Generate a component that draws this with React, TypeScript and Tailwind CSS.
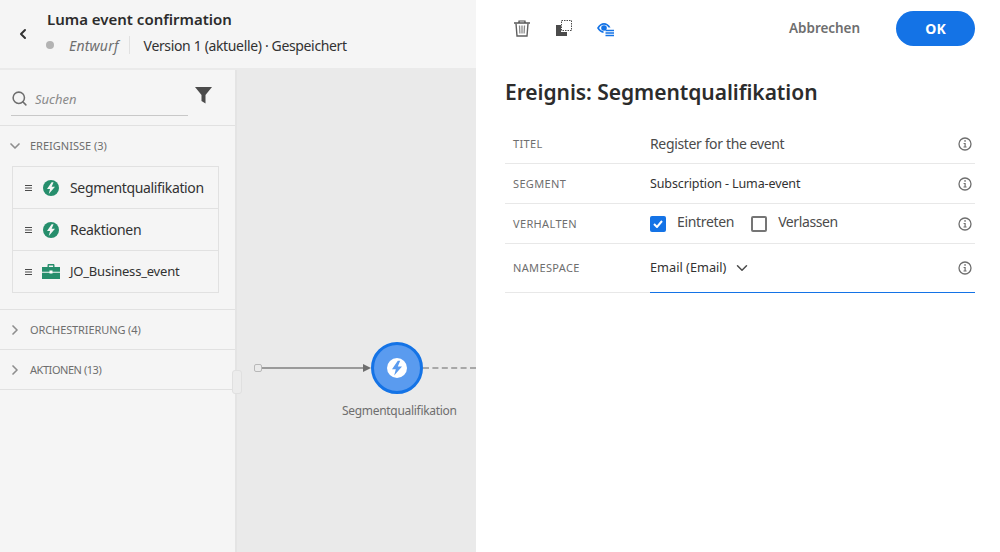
import React from 'react';
import { ChevronDown, ChevronLeft, ChevronRight, Search } from 'lucide-react';

const FONT = 'font-["Noto_Sans","Open_Sans",sans-serif]';

const Bolt: React.FC<{ fill: string; bolt: string; size: number }> = ({ fill, bolt, size }) => (
  <svg width={size} height={size} viewBox="0 0 20 20" className="shrink-0">
    <circle cx="10" cy="10" r="10" fill={fill} />
    <path d="M10.800 2.800 5 11.200h3.800L7.200 17.400 15 8.400h-4.200l2.400-5.600z" fill={bolt} />
  </svg>
);

const Briefcase: React.FC = () => (
  <svg width="18" height="15" viewBox="0 0 18 15" className="shrink-0">
    <path d="M5.500 3V1.200C5.500.5 6 0 6.700 0h4.600c.7 0 1.200.5 1.200 1.200V3h-1.400V1.400H6.900V3z" fill="#268e6c" />
    <path d="M0 3h18v4.800H0zM0 8.800h18V15H0z" fill="#268e6c" />
    <rect x="7.500" y="6.500" width="3" height="3" fill="#fff" />
  </svg>
);

const Info: React.FC = () => (
  <svg width="14" height="14" viewBox="0 0 14 14" className="shrink-0">
    <circle cx="7" cy="7" r="6" fill="none" stroke="#6e6e6e" strokeWidth="1.300" />
    <rect x="6.300" y="3.200" width="1.500" height="1.500" fill="#6e6e6e" />
    <path d="M5.600 6h2.100v3.600h.9v.9H5.500v-.9h1V6.900h-.9z" fill="#6e6e6e" />
  </svg>
);

const DragLines: React.FC = () => (
  <svg width="7" height="6" viewBox="0 0 7 6" className="shrink-0">
    <path d="M0 .5h7M0 3h7M0 5.500h7" stroke="#4b4b4b" strokeWidth="1" />
  </svg>
);

const PaletteItem: React.FC<{ label: string; textClass: string; icon: React.ReactNode }> = ({ label, textClass, icon }) => (
  <div className="flex h-[42px] items-center border-b border-[#e1e1e1] pl-3 last:h-[41px] last:border-b-0">
    <DragLines />
    <div className="ml-[10px] flex w-[18px] justify-center">{icon}</div>
    <span className={`ml-[10px] text-[#323232] ${textClass}`}>{label}</span>
  </div>
);

const Section: React.FC<{ label: string; count: string; tracking: string }> = ({ label, count, tracking }) => (
  <div className="flex h-10 items-center border-b border-[#e1e1e1] pl-[7px] pt-px">
    <ChevronRight size={16} strokeWidth={2.500} className="text-[#8e8e8e]" />
    <span className={`ml-[7px] text-[11px] text-[#6e6e6e] ${tracking}`}>{label} ({count})</span>
  </div>
);

const Field: React.FC<{ label: string; height: string; line?: string; children: React.ReactNode }> = ({ label, height, line = 'border-b border-[#e8e8e8]', children }) => (
  <div className={`flex items-center ${height} ${line}`}>
    <span className="w-[145px] pt-px pl-2 text-[11px] tracking-[0.35px] text-[#6e6e6e]">{label}</span>
    <div className="flex flex-1 items-center">{children}</div>
    <div className="mr-[3px]"><Info /></div>
  </div>
);

const App: React.FC = () => {
  return (
    <div className={`flex h-[552px] w-[1000px] overflow-hidden bg-white ${FONT}`}>
      <div className="flex w-[476px] flex-col">
        <header className="flex h-[68px] shrink-0 bg-[#f5f5f5]">
          <div className="flex w-[46px] items-center justify-center">
            <ChevronLeft size={16} strokeWidth={3} className="text-[#323232]" />
          </div>
          <div className="pt-[9px]">
            <div className="pl-px text-[15px] font-semibold leading-5 text-[#2c2c2c]">Luma event confirmation</div>
            <div className="mt-[6px] flex h-5 items-center text-[14px]">
              <span className="h-2 w-2 rounded-full bg-[#b3b3b3]" />
              <span className="ml-[15px] italic tracking-[0.2px] text-[#6e6e6e]">Entwurf</span>
              <span className="ml-[10px] h-[18px] w-px bg-[#e1e1e1]" />
              <span className="ml-[14px] tracking-[-0.35px] text-[#323232]">Version 1 (aktuelle) · Gespeichert</span>
            </div>
          </div>
        </header>
        <div className="flex flex-1 border-t-2 border-[#eaeaea]">
          <aside className="w-[235px] shrink-0 bg-[#f5f5f5]">
            <div className="flex h-[56px] border-b border-[#e1e1e1] pl-[11px]">
              <div className="mt-[15px] flex h-[31px] w-[177px] items-center border-b border-[#c8c8c8]">
                <Search size={17} strokeWidth={2.200} className="mb-[4px] text-[#6e6e6e]" />
                <span className="ml-[7px] text-[13px] italic text-[#8a8a8a]">Suchen</span>
              </div>
              <svg width="17" height="17" viewBox="0 0 17 17" className="ml-[7px] mt-[17px]">
                <path d="M0 0h17L10.500 8v8.500L6.500 14V8z" fill="#4b4b4b" />
              </svg>
            </div>
            <div className="border-b border-[#e1e1e1] pb-4">
              <div className="flex h-10 items-center pl-[7px]">
                <ChevronDown size={16} strokeWidth={2.500} className="text-[#8e8e8e]" />
                <span className="ml-[7px] text-[11px] text-[#6e6e6e]">EREIGNISSE (3)</span>
              </div>
              <div className="ml-3 w-[207px] border border-[#e1e1e1]">
                <PaletteItem label="Segmentqualifikation" textClass="text-[14px] tracking-[-0.35px]" icon={<Bolt size={16} fill="#268e6c" bolt="#f5f5f5" />} />
                <PaletteItem label="Reaktionen" textClass="text-[14px] tracking-[-0.3px]" icon={<Bolt size={16} fill="#268e6c" bolt="#f5f5f5" />} />
                <PaletteItem label="JO_Business_event" textClass="text-[13px] tracking-[-0.2px]" icon={<Briefcase />} />
              </div>
            </div>
            <Section label="ORCHESTRIERUNG" count="4" tracking="tracking-[-0.1px]" />
            <Section label="AKTIONEN" count="13" tracking="tracking-[-0.45px]" />
          </aside>
          <main className="relative flex-1 border-l-2 border-[#e4e4e4] bg-[#eaeaea]">
            {/* journey canvas: node placement is free-form */}
            <div className="absolute left-[-5px] top-[300px] h-6 w-[10px] rounded-[3px] border border-[#e0e0e0] bg-[#ececec]" />
            <div className="absolute left-[17px] top-[294px] h-[8px] w-[8px] rounded-[2px] border border-[#b8b8b8]" />
            <div className="absolute left-[25px] top-[297px] h-[2px] w-[102px] bg-[#9a9a9a]" />
            <svg width="8" height="8" viewBox="0 0 8 8" className="absolute left-[126px] top-[294px]">
              <path d="M0 0l8 4-8 4z" fill="#6e6e6e" />
            </svg>
            <div className="absolute left-[134px] top-[272px] flex h-[52px] w-[52px] items-center justify-center rounded-full border-[3px] border-[#1473e6] bg-[#5a9bef]">
              <Bolt size={20} fill="#fff" bolt="#5a9bef" />
            </div>
            <div className="absolute left-[186px] top-[297px] w-[53px] border-t-2 border-dashed border-[#a8a8a8]" />
            <div className="absolute left-[105px] top-[332px] text-[12px] tracking-[-0.3px] text-[#6e6e6e]">Segmentqualifikation</div>
          </main>
        </div>
      </div>
      <section className="flex-1 bg-white pl-[29px] pr-[25px]">
        <div className="flex h-[57px] items-center">
          <svg width="16" height="17" viewBox="0 0 16 17" className="ml-[9px]">
            <path d="M0 3h16" stroke="#4b4b4b" strokeWidth="1.400" />
            <path d="M5 3V1h6v2" fill="none" stroke="#4b4b4b" strokeWidth="1.200" />
            <path d="M2 3.500 3 16h10l1-12.500" fill="none" stroke="#5f5f5f" strokeWidth="1.400" />
            <path d="M5.500 5.500l.4 8M8 5.500v8M10.500 5.500l-.4 8" stroke="#8a8a8a" strokeWidth="1.300" />
          </svg>
          <svg width="16" height="17" viewBox="0 0 16 17" className="ml-[26px]">
            <path d="M0 5h5v7h6v4H0z" fill="#4b4b4b" />
            <rect x="5.500" y=".5" width="10" height="10" fill="none" stroke="#4b4b4b" strokeDasharray="1.500 1" />
          </svg>
          <svg width="18" height="17" viewBox="0 0 18 17" className="ml-[24px] mt-[1px]">
            <path d="M1 7c2-3.500 4.500-5 7-5s5 1.500 6.500 4.500h-2C11.300 4.500 9.700 3.800 8 3.800 6 3.800 4.300 5 3.100 7c1 1.700 2.600 3 4.400 3.200V12C5 11.800 2.700 10.200 1 7z" fill="#1473e6" />
            <circle cx="8" cy="7" r="2.800" fill="#1473e6" />
            <path d="M9.500 9.500H18M9.500 12H18M9.500 14.500H18" stroke="#1473e6" strokeWidth="1.400" />
          </svg>
          <span className="ml-auto text-[13.500px] font-semibold tracking-[-0.05px] text-[#6e6e6e]">Abbrechen</span>
          <button className="ml-[36px] h-[35px] w-[79px] rounded-full bg-[#1473e6] text-[14px] font-bold text-white">OK</button>
        </div>
        <h1 className="mt-[21px] text-[21px] font-semibold leading-7 tracking-[-0.05px] text-[#2c2c2c]">Ereignis: Segmentqualifikation</h1>
        <div className="mt-[18px]">
          <Field label="TITEL" height="h-10">
            <span className="text-[14px] tracking-[-0.36px] text-[#4b4b4b]">Register for the event</span>
          </Field>
          <Field label="SEGMENT" height="h-10">
            <span className="mt-px text-[12.500px] tracking-[-0.12px] text-[#323232]">Subscription - Luma-event</span>
          </Field>
          <Field label="VERHALTEN" height="h-10">
            <span className="flex h-4 w-4 items-center justify-center rounded-[2px] bg-[#1473e6]">
              <svg width="10" height="8" viewBox="0 0 10 8"><path d="M1 4l3 3 5-6" fill="none" stroke="#fff" strokeWidth="2" /></svg>
            </span>
            <span className="mb-[4px] ml-[11px] text-[14px] tracking-[-0.33px] text-[#4b4b4b]">Eintreten</span>
            <span className="ml-[17px] h-4 w-4 rounded-[2px] border-2 border-[#757575]" />
            <span className="mb-[4px] ml-[11px] text-[14px] tracking-[-0.4px] text-[#4b4b4b]">Verlassen</span>
          </Field>
          <Field label="NAMESPACE" height="h-[48px]" line="">
            <span className="text-[12.750px] text-[#323232]">Email (Email)</span>
            <ChevronDown size={18} strokeWidth={2} className="ml-[7px] text-[#4b4b4b]" />
          </Field>
          <div className="flex h-px">
            <div className="w-[145px] bg-[#e8e8e8]" />
            <div className="flex-1 border-t border-[#1473e6]" />
          </div>
        </div>
      </section>
    </div>
  );
};

export default App;
